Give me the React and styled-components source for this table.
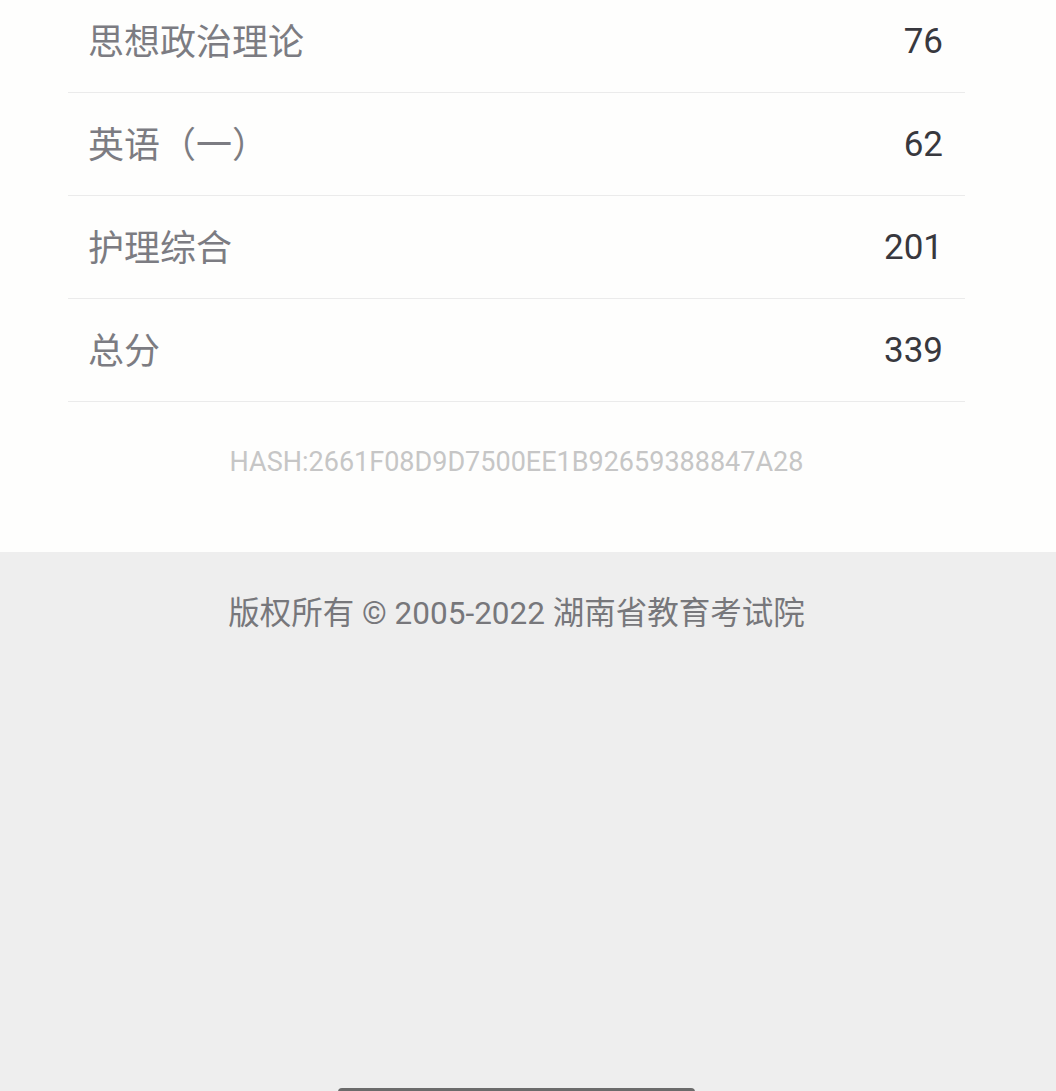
import React from "react";
import styled, { createGlobalStyle } from "styled-components";

const Global = createGlobalStyle`
  html, body { margin: 0; padding: 0; background: #eeeeee; }
  body { font-family: Roboto, "Noto Sans CJK SC", "Noto Sans", sans-serif; overflow: hidden; }
`;

const Page = styled.div`
  min-height: 1091px;
  display: flex;
  flex-direction: column;
`;

const Sheet = styled.section`
  background: #fefefd;
  margin-top: -10px;
  height: 562px;
  display: flex;
  flex-direction: column;
  align-items: center;
`;

const Table = styled.div`
  width: 897px;
  margin-left: -23px;
  display: flex;
  flex-direction: column;
`;

const Row = styled.div`
  height: 102px;
  border-bottom: 1px solid #ebebeb;
  display: flex;
  align-items: center;
  justify-content: space-between;
  padding: 0 22px 0 20px;
`;

const Label = styled.span`
  font-size: 36px;
  line-height: 44px;
  margin-bottom: 5px;
  color: #7c7c82;
  font-family: "Noto Sans CJK SC", Roboto, sans-serif;
`;

const Score = styled.span`
  font-size: 35px;
  color: #38383e;
  font-family: Roboto, sans-serif;
`;

const Hash = styled.div`
  width: 897px;
  margin-left: -23px;
  text-align: center;
  padding-top: 43px;
  font-size: 27px;
  line-height: 34px;
  color: #c6c6c6;
  font-family: Roboto, sans-serif;
`;

const Footer = styled.footer`
  flex: 1;
  background: #eeeeee;
  display: flex;
  justify-content: center;
  padding-top: 44px;
  position: relative;
`;

const Copy = styled.div`
  width: 897px;
  margin-left: -23px;
  text-align: center;
  font-size: 31.5px;
  line-height: 36px;
  color: #77777b;
  font-family: Roboto, "Noto Sans CJK SC", sans-serif;
`;

const HomeBar = styled.div`
  position: fixed;
  left: 338px;
  width: 357px;
  top: 1088px;
  height: 8px;
  border-radius: 4px;
  background: #6b6b6b;
`;

const rows = [
  ["思想政治理论", "76"],
  ["英语（一）", "62"],
  ["护理综合", "201"],
  ["总分", "339"],
];

export default function App() {
  return (
    <Page>
      <Global />
      <Sheet>
        <Table>
          {rows.map(([k, v]) => (
            <Row key={k}>
              <Label>{k}</Label>
              <Score>{v}</Score>
            </Row>
          ))}
        </Table>
        <Hash>HASH:2661F08D9D7500EE1B92659388847A28</Hash>
      </Sheet>
      <Footer>
        <Copy>版权所有 © 2005-2022 湖南省教育考试院</Copy>
      </Footer>
      <HomeBar />
    </Page>
  );
}
